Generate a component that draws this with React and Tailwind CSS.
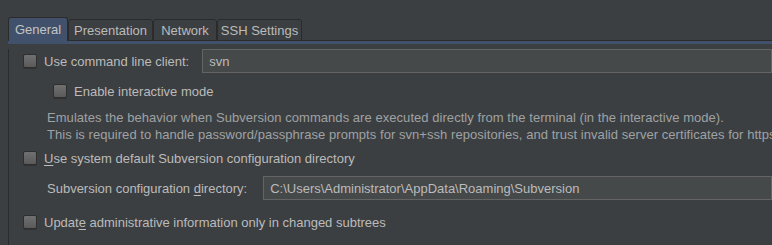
import React from 'react';

// ── Darcula-ish settings panel: Subversion / General ─────────────────────────
const font = { fontFamily: '"Liberation Sans", Arial, sans-serif' };

const Checkbox = () => (
  <span className="inline-block h-[14px] w-[14px] shrink-0 rounded-[2px] border border-[#2e2e2e] bg-gradient-to-b from-[#707070] to-[#5a5a5a] shadow-[0_1px_0_#323232]" />
);

const Tab = ({ label, active, width }) =>
  active ? (
    <div
      className={`${width} flex h-[24px] items-center justify-center rounded-t-[3px] border-l border-t border-r border-[#2b2b2b] bg-[#41506b] text-[#c4c4c4]`}
    >
      {label}
    </div>
  ) : (
    <div
      className={`${width} flex h-[22px] items-center justify-center rounded-t-[3px] border border-[#2b2b2b] text-[#bbbbbb]`}
    >
      {label}
    </div>
  );

const Row = ({ children, className = '' }) => (
  <div className={`flex items-center gap-[7px] ${className}`}>{children}</div>
);

export default function App() {
  return (
    <div
      className="h-[245px] w-[772px] overflow-hidden whitespace-nowrap bg-[#3c3f41] text-[13px] leading-none text-[#bbbbbb]"
      style={font}
    >
      {/* Tabs */}
      <div className="flex items-end pl-[8px] pt-[17px]">
        <Tab label="General" active width="w-[60px]" />
        <Tab label="Presentation" width="w-[85px]" />
        <Tab label="Network" width="w-[64px]" />
        <Tab label="SSH Settings" width="w-[85px]" />
        <div className="flex-1 border-b border-[#2b2b2b]" />
      </div>
      <div className="ml-[8px] h-[3px] bg-[#41506b]" />

      {/* Panel */}
      <div className="ml-[8px] h-full border-l border-[#2b2b2b] pl-[14px]">
        <Row className="mt-[5px] h-[24px]">
          <Checkbox />
          <span className="mr-[6px]">Use command line client:</span>
          <div className="flex h-[24px] flex-1 items-center border border-[#646464] bg-[#45494a] pl-[6px] text-[#bbbbbb]">
            svn
          </div>
        </Row>

        <Row className="ml-[30px] mt-[11px] h-[14px]">
          <Checkbox />
          <span>Enable interactive mode</span>
        </Row>

        <div className="ml-[24px] mt-[13px] flex flex-col gap-[3px] tracking-[0.05px] text-[#9fa2a4]">
          <p className="h-[14px]">
            Emulates the behavior when Subversion commands are executed directly from the terminal (in the interactive mode).
          </p>
          <p className="h-[14px]">
            This is required to handle password/passphrase prompts for svn+ssh repositories, and trust invalid server certificates for https repositories.
          </p>
        </div>

        <Row className="mt-[9px] h-[14px]">
          <Checkbox />
          <span>
            <u className="underline-offset-2">U</u>se system default Subversion configuration directory
          </span>
        </Row>

        <Row className="ml-[24px] mt-[11px] h-[24px]">
          <span className="mr-[9px]">
            Subversion configuration <u className="underline-offset-2">d</u>irectory:
          </span>
          <div className="flex h-[24px] flex-1 items-center border border-[#646464] bg-[#45494a] pl-[6px]">
            C:\Users\Administrator\AppData\Roaming\Subversion
          </div>
        </Row>

        <Row className="mt-[15px] h-[14px]">
          <Checkbox />
          <span>
            Updat<u className="underline-offset-2">e</u> administrative information only in changed subtrees
          </span>
        </Row>
      </div>
    </div>
  );
}
